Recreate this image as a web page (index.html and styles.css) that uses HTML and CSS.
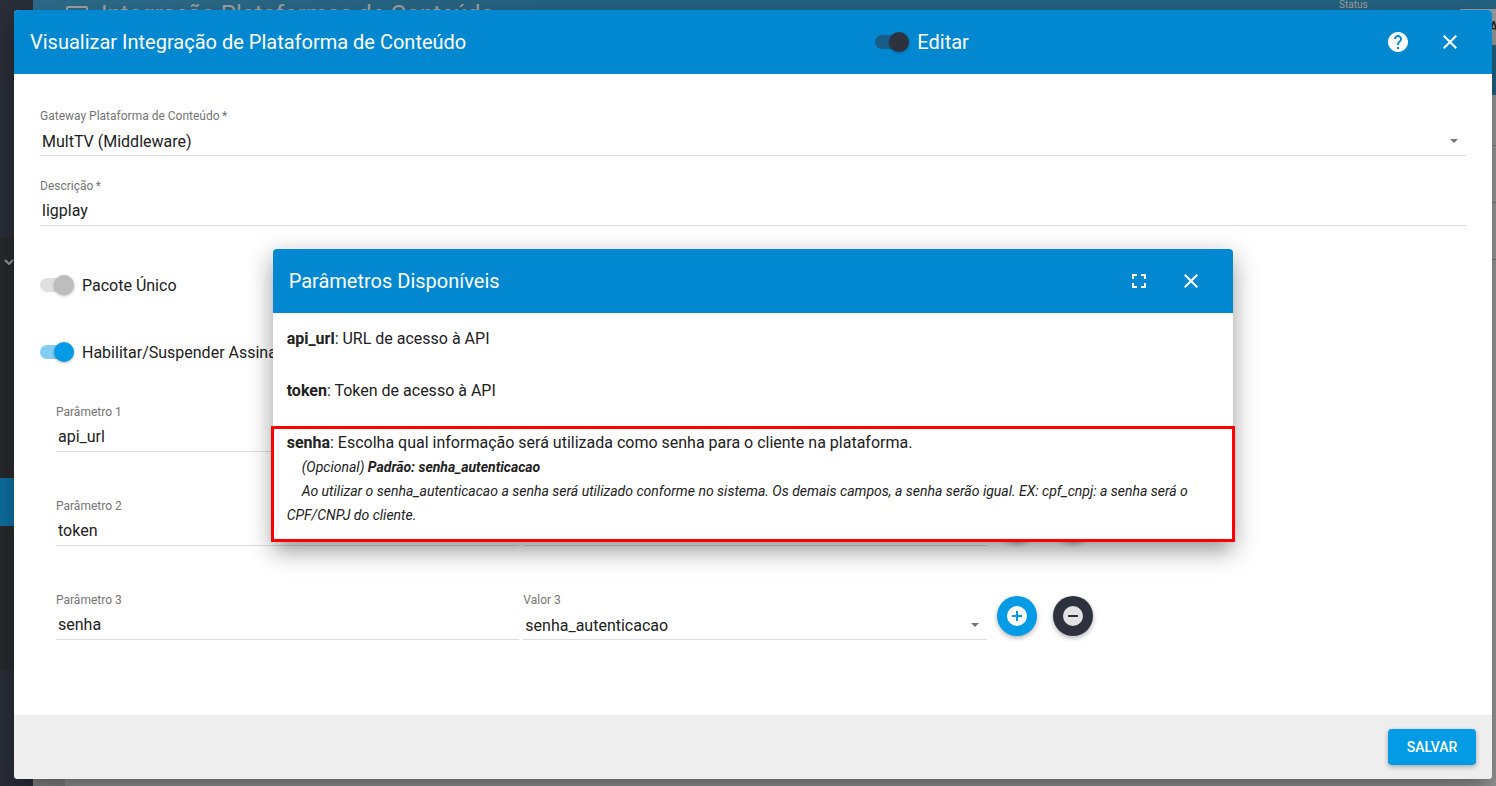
FILE: index.html
```html
<!DOCTYPE html>
<html lang="pt-BR">
<head>
    <meta charset="UTF-8">
    <meta name="viewport" content="width=device-width, initial-scale=1.0">
    <title>Integração Plataformas de Conteúdo</title>
    <link rel="stylesheet" href="styles.css">
</head>
<body>
    <div class="page">
        <nav class="sidebar">
            <div class="sidebar-group">
                <svg class="chevron" viewBox="0 0 10 6"><path d="M1 1l4 4 4-4"/></svg>
                <div class="sidebar-active"></div>
            </div>
        </nav>
        <main class="main">
            <header class="page-header">
                <svg class="page-icon" viewBox="0 0 24 20"><rect x="2" y="2" width="20" height="14" rx="1"/><path d="M8 19h8"/></svg>
                <h1>Integração Plataformas de Conteúdo</h1>
                <span class="status">Status</span>
                <button class="add-button" type="button">ADICIONAR</button>
            </header>
            <div class="list">
                <div class="list-row"></div>
                <div class="list-row"></div>
                <div class="list-row"></div>
            </div>
        </main>
    </div>

    <div class="dialog">
        <div class="toolbar">
            <h2>Visualizar Integração de Plataforma de Conteúdo</h2>
            <label class="switch switch-dark">
                <input type="checkbox" checked> Editar
            </label>
            <div class="actions">
                <button class="icon-button" type="button" aria-label="Ajuda">
                    <svg viewBox="0 0 24 24"><path d="M12 2C6.48 2 2 6.48 2 12s4.48 10 10 10 10-4.48 10-10S17.52 2 12 2zm1 17h-2v-2h2v2zm2.07-7.75l-.9.92C13.45 12.9 13 13.5 13 15h-2v-.5c0-1.1.45-2.1 1.17-2.83l1.24-1.26c.37-.36.59-.86.59-1.41 0-1.1-.9-2-2-2s-2 .9-2 2H8c0-2.21 1.79-4 4-4s4 1.79 4 4c0 .88-.36 1.68-.93 2.25z"/></svg>
                </button>
                <button class="icon-button" type="button" aria-label="Fechar">
                    <svg viewBox="0 0 24 24"><path d="M19 6.41L17.59 5 12 10.59 6.41 5 5 6.41 10.59 12 5 17.59 6.41 19 12 13.41 17.59 19 19 17.59 13.41 12z"/></svg>
                </button>
            </div>
        </div>

        <form class="content">
            <div class="field">
                <label for="gateway">Gateway Plataforma de Conteúdo&thinsp;*</label>
                <div class="select">
                    <select id="gateway"><option>MultTV (Middleware)</option></select>
                    <svg viewBox="0 0 8 4"><path d="M0 0h8L4 4z"/></svg>
                </div>
            </div>
            <div class="field">
                <label for="descricao">Descrição&thinsp;*</label>
                <input type="text" id="descricao" value="ligplay">
            </div>

            <div class="switches">
                <label class="switch">
                    <input type="checkbox"> Pacote Único
                </label>
                <label class="switch">
                    <input type="checkbox" checked> Habilitar/Suspender Assinante
                </label>
            </div>

            <div class="params">
                <div class="param-row">
                    <div class="field">
                        <label for="param1">Parâmetro 1</label>
                        <input type="text" id="param1" value="api_url">
                    </div>
                    <div class="field">
                        <input type="text" aria-label="Valor 1">
                    </div>
                    <div class="row-buttons">
                        <button class="fab" type="button" aria-label="Adicionar"><svg viewBox="0 0 24 24"><path d="M12 2a10 10 0 1 0 0 20 10 10 0 0 0 0-20zm5 11h-4v4h-2v-4H7v-2h4V7h2v4h4v2z"/></svg></button>
                        <button class="fab fab-dark" type="button" aria-label="Remover"><svg viewBox="0 0 24 24"><path d="M12 2a10 10 0 1 0 0 20 10 10 0 0 0 0-20zm5 11H7v-2h10v2z"/></svg></button>
                    </div>
                </div>
                <div class="param-row">
                    <div class="field">
                        <label for="param2">Parâmetro 2</label>
                        <input type="text" id="param2" value="token">
                    </div>
                    <div class="field">
                        <input type="text" aria-label="Valor 2">
                    </div>
                    <div class="row-buttons">
                        <button class="fab" type="button" aria-label="Adicionar"><svg viewBox="0 0 24 24"><path d="M12 2a10 10 0 1 0 0 20 10 10 0 0 0 0-20zm5 11h-4v4h-2v-4H7v-2h4V7h2v4h4v2z"/></svg></button>
                        <button class="fab fab-dark" type="button" aria-label="Remover"><svg viewBox="0 0 24 24"><path d="M12 2a10 10 0 1 0 0 20 10 10 0 0 0 0-20zm5 11H7v-2h10v2z"/></svg></button>
                    </div>
                </div>
                <div class="param-row">
                    <div class="field">
                        <label for="param3">Parâmetro 3</label>
                        <input type="text" id="param3" value="senha">
                    </div>
                    <div class="field">
                        <label for="valor3">Valor 3</label>
                        <div class="select">
                            <select id="valor3"><option>senha_autenticacao</option></select>
                            <svg viewBox="0 0 8 4"><path d="M0 0h8L4 4z"/></svg>
                        </div>
                    </div>
                    <div class="row-buttons">
                        <button class="fab" type="button" aria-label="Adicionar"><svg viewBox="0 0 24 24"><path d="M12 2a10 10 0 1 0 0 20 10 10 0 0 0 0-20zm5 11h-4v4h-2v-4H7v-2h4V7h2v4h4v2z"/></svg></button>
                        <button class="fab fab-dark" type="button" aria-label="Remover"><svg viewBox="0 0 24 24"><path d="M12 2a10 10 0 1 0 0 20 10 10 0 0 0 0-20zm5 11H7v-2h10v2z"/></svg></button>
                    </div>
                </div>
            </div>
        </form>

        <div class="footer">
            <button class="save-button" type="button">SALVAR</button>
        </div>

        <div class="popup-layer">
            <div class="popup">
                <div class="toolbar">
                    <h2>Parâmetros Disponíveis</h2>
                    <div class="actions">
                        <button class="icon-button" type="button" aria-label="Tela cheia">
                            <svg viewBox="0 0 24 24"><path d="M7 14H5v5h5v-2H7v-3zm-2-4h2V7h3V5H5v5zm12 7h-3v2h5v-5h-2v3zM14 5v2h3v3h2V5h-5z"/></svg>
                        </button>
                        <button class="icon-button" type="button" aria-label="Fechar">
                            <svg viewBox="0 0 24 24"><path d="M19 6.41L17.59 5 12 10.59 6.41 5 5 6.41 10.59 12 5 17.59 6.41 19 12 13.41 17.59 19 19 17.59 13.41 12z"/></svg>
                        </button>
                    </div>
                </div>
                <div class="popup-body">
                    <div class="item"><p><b>api_url</b>: URL de acesso à API</p></div>
                    <div class="item"><p><b>token</b>: Token de acesso à API</p></div>
                    <div class="item highlight">
                        <p><b>senha</b>: Escolha qual informação será utilizada como senha para o cliente na plataforma.</p>
                        <p class="note">(Opcional) <b>Padrão: senha_autenticacao</b></p>
                        <p class="note">Ao utilizar o senha_autenticacao a senha será utilizado conforme no sistema. Os demais campos, a senha serão igual. EX: cpf_cnpj: a senha será o CPF/CNPJ do cliente.</p>
                    </div>
                </div>
            </div>
        </div>
    </div>
</body>
</html>
```
FILE: styles.css
```css
* {
    box-sizing: border-box;
}

body {
    margin: 0;
    font-family: Roboto, sans-serif;
    font-size: 16px;
    color: #212121;
    overflow: hidden;
}

h1, h2, p {
    margin: 0;
    font-weight: 400;
}

button, input, select {
    font-family: inherit;
    font-size: 16px;
    color: inherit;
}

button {
    border: none;
    cursor: pointer;
}

svg {
    display: block;
    fill: currentColor;
}

/* page behind the dialog */
.page {
    display: flex;
    height: 100vh;
}

.sidebar {
    width: 33px;
    padding-top: 238px;
    background: #2b2f39;
}

.sidebar-group {
    height: 432px;
    padding-top: 21px;
    background: #2a2b2f;
}

.chevron {
    width: 10px;
    height: 6px;
    margin-left: 4px;
    fill: none;
    stroke: #9a9a9a;
    stroke-width: 2;
}

.sidebar-active {
    height: 48px;
    margin-top: 213px;
    background: #0f72a5;
}

.main {
    flex: 1;
    display: flex;
    flex-direction: column;
    background: #8a8a8a;
}

.page-header {
    display: flex;
    align-items: flex-start;
    height: 95px;
    padding-left: 32px;
    background: linear-gradient(90deg, #2d6e8e, #246484 40%);
    color: #a3a3a3;
}

.page-header h1 {
    flex: 1;
    margin-left: 12px;
    font-size: 24px;
    line-height: 28px;
}

.page-icon {
    width: 24px;
    height: 20px;
    margin-top: 5px;
    fill: none;
    stroke: currentColor;
    stroke-width: 2;
}

.status {
    width: 121px;
    font-size: 10px;
    line-height: 10px;
}

.add-button {
    width: 36px;
    height: 36px;
    margin-top: 9px;
    padding: 0 0 0 29px;
    overflow: hidden;
    background: #9b9b9b;
    color: #222;
    font-size: 14px;
    font-weight: 500;
    text-align: left;
}

.list {
    flex: 1;
    margin-left: 32px;
    background: #9b9b9b;
}

.list-row {
    height: 57px;
    border-bottom: 1px solid #777;
}

.list-row:first-child {
    height: 51px;
}

/* dialog */
.dialog {
    position: absolute;
    top: 10px;
    right: 4px;
    bottom: 7px;
    left: 14px;
    display: flex;
    flex-direction: column;
    background: #fff;
    border-radius: 4px;
    box-shadow: 0 11px 15px -7px rgba(0, 0, 0, 0.2), 0 24px 38px 3px rgba(0, 0, 0, 0.14), 0 9px 46px 8px rgba(0, 0, 0, 0.12);
}

.toolbar {
    display: flex;
    align-items: center;
    justify-content: space-between;
    height: 64px;
    padding: 0 22px 0 16px;
    background: #0288d1;
    color: #fff;
    border-radius: 4px 4px 0 0;
}

.toolbar h2 {
    font-size: 20px;
}

.actions {
    display: flex;
    gap: 12px;
}

.icon-button {
    width: 40px;
    height: 40px;
    padding: 8px;
    background: none;
}

.icon-button svg {
    width: 24px;
    height: 24px;
}

.content {
    flex: 1;
    padding: 34px 26px 0;
}

.field + .field {
    margin-top: 22px;
}

.field label {
    display: block;
    margin-bottom: 2px;
    font-size: 12px;
    line-height: 16px;
    color: #757575;
}

.field input,
.field select {
    display: block;
    width: 100%;
    height: 30px;
    padding: 0 2px;
    border: none;
    border-bottom: 1px solid #dcdcdc;
    border-radius: 0;
    background: none;
    appearance: none;
    outline: none;
}

.field select {
    padding-top: 2px;
}

.select {
    position: relative;
}

.select svg {
    position: absolute;
    top: 13px;
    right: 8px;
    width: 8px;
    height: 4px;
    color: #757575;
    pointer-events: none;
}

.switches {
    display: flex;
    flex-direction: column;
    gap: 43px;
    margin: 47px 0 40px;
}

.switch {
    display: flex;
    align-items: center;
    gap: 8px;
    height: 24px;
}

.switch input {
    position: relative;
    width: 34px;
    height: 14px;
    margin: 0;
    border-radius: 7px;
    background: #e0e0e0;
    appearance: none;
}

.switch input::before {
    content: "";
    position: absolute;
    top: -3px;
    right: 0;
    width: 20px;
    height: 20px;
    border-radius: 50%;
    background: #bdbdbd;
    box-shadow: 0 1px 3px rgba(0, 0, 0, 0.3);
}

.switch input:checked {
    background: #81cdf3;
}

.switch input:checked::before {
    background: #039be5;
}

.switch-dark {
    font-size: 20px;
}

.switch-dark input:checked {
    background: #185d88;
}

.switch-dark input:checked::before {
    background: #2d323e;
}

.params {
    display: flex;
    flex-direction: column;
    gap: 46px;
    padding: 0 12px 0 16px;
}

.param-row {
    display: grid;
    grid-template-columns: 1fr 1fr 1fr;
    gap: 4px;
    align-items: end;
}

.param-row .field {
    margin-top: 0;
}

.row-buttons {
    display: flex;
    gap: 16px;
    padding: 0 0 4px 6px;
}

.fab {
    width: 40px;
    height: 40px;
    padding: 8px;
    border-radius: 50%;
    background: #039be5;
    color: #fff;
    box-shadow: 0 2px 5px rgba(0, 0, 0, 0.3);
}

.fab svg {
    width: 24px;
    height: 24px;
}

.fab-dark {
    background: #2d323e;
    color: #e3e3e5;
}

.footer {
    display: flex;
    align-items: center;
    justify-content: flex-end;
    height: 64px;
    padding: 0 16px;
    background: #eee;
    border-radius: 0 0 4px 4px;
}

.save-button {
    width: 88px;
    height: 36px;
    padding: 0;
    border-radius: 4px;
    background: #039be5;
    color: #fff;
    font-size: 14px;
    font-weight: 500;
    box-shadow: 0 2px 5px rgba(0, 0, 0, 0.3);
}

/* popup with the available parameters */
.popup-layer {
    position: absolute;
    inset: 0;
    display: flex;
    align-items: center;
    justify-content: center;
}

.popup {
    width: 65%;
    background: #fff;
    border-radius: 4px;
    box-shadow: 0 11px 15px -7px rgba(0, 0, 0, 0.2), 0 12px 24px 2px rgba(0, 0, 0, 0.18), 0 5px 24px 4px rgba(0, 0, 0, 0.12);
}

.popup-body {
    display: flex;
    flex-direction: column;
    gap: 28px;
    padding: 14px;
    line-height: 24px;
}

.highlight {
    position: relative;
}

.highlight::after {
    content: "";
    position: absolute;
    inset: -5px -16px -15px;
    border: 3px solid #f00;
}

.note {
    font-size: 14px;
    font-style: italic;
    text-indent: 15px;
}
```
